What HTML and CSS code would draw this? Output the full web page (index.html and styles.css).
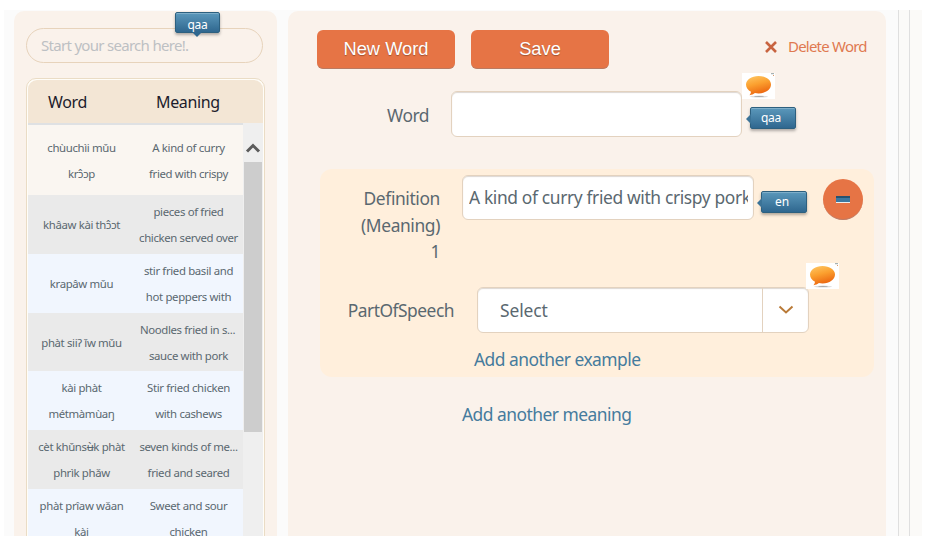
FILE: index.html
```
<!DOCTYPE html>
<html lang="en">
<head>
<meta charset="utf-8">
<title>Dictionary</title>
<link rel="stylesheet" href="styles.css">
</head>
<body>
<svg class="defs" width="0" height="0">
  <defs>
    <linearGradient id="orange" x1="0" y1="0" x2=".35" y2="1">
      <stop offset="0" stop-color="#ffc966"/><stop offset=".5" stop-color="#fba02f"/><stop offset="1" stop-color="#ec6710"/>
    </linearGradient>
    <symbol id="bubble" viewBox="0 0 33 26">
      <ellipse cx="17" cy="23.6" rx="9" ry="1" fill="#ddd"/>
      <ellipse cx="17" cy="23.4" rx="5" ry=".5" fill="#aaa"/>
      <path d="M16.500 3C9.500 3 4 6.800 4 11.500c0 3 2 5.700 5 7.300-.1 1.200-.6 2.300-1.500 3.400 2.100-.2 4-.9 5.400-2.100 1.300.3 2.400.4 3.600.4 7 0 12.500-3.900 12.500-8.900S23.500 3 16.500 3z" fill="url(#orange)"/>
      <path d="M29 .7h3" stroke="#788" stroke-width=".8"/><path d="M31 2.500h1" stroke="#d96" stroke-width="1"/>
    </symbol>
  </defs>
</svg>
<div class="page">
  <aside class="sidebar">
    <div class="search"><span class="hint">Start your search here!.</span><span class="tag tag-down">qaa</span></div>
    <div class="list">
      <div class="head"><span class="h-word">Word</span><span class="h-meaning">Meaning</span></div>
      <div class="body">
        <div class="rows">
          <div class="row first"><div>chu&#768;uchi&#768;i mu&#780;u<br>krɔ&#770;ɔp</div><div>A kind of curry<br>fried with crispy</div></div>
          <div class="row grey"><div>kha&#770;aw ka&#768;i thɔ&#770;ɔt</div><div>pieces of fried<br>chicken served over</div></div>
          <div class="row"><div>krapa&#770;w mu&#780;u</div><div>stir fried basil and<br>hot peppers with</div></div>
          <div class="row grey short"><div>pha&#768;t siiʔ i&#780;w mu&#780;u</div><div><span class="clip">Noodles fried in s...</span><br>sauce with pork</div></div>
          <div class="row"><div>ka&#768;i pha&#768;t<br>me&#769;tma&#768;mu&#768;aŋ</div><div>Stir fried chicken<br>with cashews</div></div>
          <div class="row grey"><div>ce&#768;t khu&#780;nsʉ&#768;k pha&#768;t<br>phri&#768;k pha&#780;w</div><div>seven kinds of me...<br>fried and seared</div></div>
          <div class="row"><div>pha&#768;t pri&#770;aw wa&#780;an<br>ka&#768;i</div><div>Sweet and sour<br>chicken</div></div>
        </div>
        <div class="scroll">
          <svg width="20" height="39" viewBox="0 0 20 39"><path d="M4 28.500l6-6 6 6" fill="none" stroke="#5c5c5c" stroke-width="3"/></svg>
          <div class="thumb"></div>
        </div>
      </div>
    </div>
  </aside>
  <main class="main">
    <div class="toolbar">
      <div class="btn">New Word</div><div class="btn">Save</div>
      <div class="delete"><svg width="12" height="12" viewBox="0 0 12 12"><path d="M1 1l10 10M11 1l-10 10" stroke="#c86440" stroke-width="2.600"/></svg><span>Delete Word</span></div>
    </div>
    <div class="field word">
      <label>Word</label><div class="input"></div>
      <span class="tag tag-left">qaa</span>
      <svg class="note" width="33" height="26"><use href="#bubble"/></svg>
    </div>
    <section class="meaning">
      <div class="field def">
        <label>Definition<br>(Meaning)<br>1</label>
        <div class="input"><span>A kind of curry fried with crispy pork</span></div>
        <span class="tag tag-left">en</span>
        <div class="remove"><i></i></div>
      </div>
      <div class="field pos">
        <label>PartOfSpeech</label>
        <div class="select"><span>Select</span><div class="arrow"><svg width="16" height="10" viewBox="0 0 16 10"><path d="M1.500 1.500L8 7.500l6.500-6" fill="none" stroke="#b97a37" stroke-width="2"/></svg></div></div>
        <svg class="note" width="33" height="26"><use href="#bubble"/></svg>
      </div>
      <a class="link example">Add another example</a>
    </section>
    <a class="link another">Add another meaning</a>
  </main>
  <div class="rail"></div>
</div>
</body>
</html>
```
FILE: styles.css
```
* { box-sizing: border-box; }
body { margin: 0; height: 560px; overflow: hidden; background: #fff; color: #5a6870; font-family: "Noto Sans", sans-serif; }
.defs { display: block; height: 0; }
.page { display: flex; width: 918px; height: 526px; margin: 10px 0 0 4px; padding: 1px 0 0 10px; overflow: hidden; background: #fbfbfb; }
.sidebar { width: 263px; margin-right: 11px; padding: 17px 12px 0; background: #faf2eb; border-radius: 10px 10px 0 0; }
.search { position: relative; width: 237px; height: 35px; padding-left: 14px; border: 1px solid #e7d3bb; border-radius: 18px; line-height: 32px; }
.hint { font-size: 15px; letter-spacing: -.7px; color: #bdc0c3; }
.tag { position: relative; display: block; width: 46px; height: 22px; padding-right: 4px; border: 1px solid #2d607f; border-radius: 2px; background: linear-gradient(#5b98bb, #2f678f); box-shadow: inset 0 1px 0 #7fafca, 0 2px 3px rgba(0,0,0,.3); color: #fff; font-size: 12px; letter-spacing: -.2px; line-height: 20px; text-align: center; }
.tag::after { content: ""; position: absolute; border: 5px solid transparent; }
.tag-down { position: absolute; left: 148px; top: -17px; width: 45px; height: 21px; padding: 0; line-height: 24px; }
.tag-down::after { left: 16px; top: 19px; border-top-color: #2f678f; }
.tag-left::after { left: -10px; top: 6px; border-right-color: #3b7397; }
.list { width: 239px; height: 480px; margin-top: 15px; padding: 1px; background: #fffdf8; border: 1px solid #eadcc5; border-radius: 10px 10px 0 0; }
.head { display: flex; height: 43px; background: #f3e6d5; border-radius: 9px 9px 0 0; font-size: 16px; line-height: 45px; color: #1c1c2c; letter-spacing: -.35px; }
.h-word { width: 107px; padding-left: 20px; }
.h-meaning { padding-left: 21px; }
.body { display: flex; }
.rows { width: 215px; border-top: 2px solid #dfe1e3; }
.row { display: flex; align-items: center; height: 59px; background: #f1f6fe; font-size: 11.4px; line-height: 26px; letter-spacing: -.36px; text-align: center; white-space: nowrap; }
.row > div { width: 107px; padding-top: 1px; }
.first { height: 70px; background: #faf6f1; }
.grey { background: #eaeaea; }
.short { height: 58px; }
.clip { position: relative; left: -1px; }
.scroll { width: 20px; background: #efefef; }
.scroll svg { display: block; }
.thumb { width: 18px; height: 270px; margin-left: 1px; background: #cdcdcd; }
.main { width: 598px; padding: 19px 0 0 29px; background: #faf2eb; border-radius: 10px 10px 0 0; }
.toolbar { display: flex; gap: 16px; }
.btn { width: 138px; height: 39px; border-radius: 6px; background: #e67445; border-bottom: 1px solid #ba7a61; color: #fff; font: 18.3px/38px "Liberation Sans", sans-serif; text-align: center; text-shadow: 0 1px 1px rgba(0,0,0,.3); }
.delete { display: flex; align-items: center; margin: 0 0 6px 140px; color: #e07950; font-size: 15px; letter-spacing: -.78px; white-space: nowrap; }
.delete span { margin: -2px 0 0 11px; }
.field { position: relative; display: flex; font-size: 17.4px; }
.word { margin-top: 22px; height: 46px; }
label { text-align: right; letter-spacing: -.5px; }
.word label { width: 112px; margin-right: 22px; line-height: 49px; }
.input { overflow: hidden; background: #fff; border: 1px solid #e3d2bf; border-radius: 6px; box-shadow: inset 0 1px 1px #ddd8d3; white-space: nowrap; }
.word .input { width: 291px; height: 46px; }
.word .tag { margin: 16px 0 0 8px; }
.note { position: absolute; background: #fff; }
.word .note { left: 425px; top: -18px; }
.meaning { width: 554px; height: 208px; margin: 32px 0 0 3px; background: #ffefdc; border-radius: 12px; }
.def { padding-top: 6px; height: 118px; }
.def label { width: 120px; margin: 10px 22px 0 0; line-height: 26.5px; letter-spacing: -.38px; }
.def .input { width: 292px; height: 45px; padding: 0 5px 0 6px; line-height: 43px; }
.def .input span { display: block; overflow: hidden; letter-spacing: -.36px; }
.def .tag { margin: 16px 0 0 7px; }
.remove { display: flex; justify-content: center; align-items: center; width: 40px; height: 41px; margin: 4px 0 0 16px; border-radius: 50%; background: #e67445; border-bottom: 1px solid #c07a63; }
.remove i { width: 14px; height: 7px; background: linear-gradient(#255270 0 2px, #3c78a0 2px 5.500px, #eee 5.500px); }
.pos label { width: 134px; margin-right: 23px; line-height: 47px; letter-spacing: -.5px; }
.select { display: flex; width: 332px; height: 46px; background: #fff; border: 1px solid #e3d2bf; border-radius: 6px; box-shadow: inset 0 1px 1px #ddd8d3; line-height: 45px; letter-spacing: -.1px; }
.select span { width: 285px; padding-left: 22px; border-right: 1px solid #e3d2bf; }
.arrow { display: flex; flex: 1; align-items: center; justify-content: center; }
.pos .note { left: 486px; top: -24px; }
.link { display: block; color: #457b9d; font-size: 17.4px; line-height: 24px; letter-spacing: -.51px; white-space: nowrap; }
.example { margin: 13px 0 0 154px; }
.another { margin: 25px 0 0 145px; }
.rail { width: 12px; margin: -1px 0 0 12px; border: solid #dfdfdf; border-width: 0 1px; background: #fbfaf8; box-shadow: 12px 0 #fbfaf8; }
```
